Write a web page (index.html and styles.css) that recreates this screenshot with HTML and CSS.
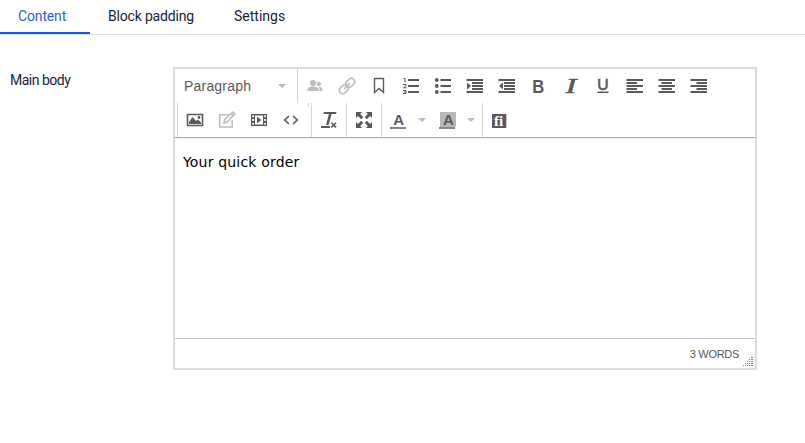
FILE: index.html
```html
<!DOCTYPE html>
<html lang="en">
<head>
<meta charset="utf-8">
<title>Main body</title>
<link rel="stylesheet" href="styles.css">
</head>
<body>
<nav class="tabs">
  <a class="tab active"><span class="t1">Content</span></a>
  <a class="tab"><span class="t2">Block padding</span></a>
  <a class="tab"><span class="t3">Settings</span></a>
</nav>
<main class="field">
  <label class="label">Main body</label>
  <section class="editor">
    <div class="toolbar">
      <div class="row">
        <div class="select"><span>Paragraph</span><i class="caret"></i></div>
        <div class="group">
          <svg class="icon off" viewBox="0 0 32 34"><circle cx="14" cy="14" r="3"/><path d="M8.500 22v-1.500q0-3 5.500-3t5.500 3V22z"/><circle cx="19.800" cy="15" r="2.200"/><path d="M19.500 17.800q4 .2 4 2.700V22h-3v-2q0-1.200-1-2.200z"/></svg>
          <svg class="icon off line" viewBox="0 0 32 34"><g transform="rotate(-45 16 17)"><rect x="6.500" y="13.700" width="10" height="6.600" rx="3.300"/><rect x="15.500" y="13.700" width="10" height="6.600" rx="3.300"/><path d="M12 17h8"/></g></svg>
          <svg class="icon line" viewBox="0 0 32 34"><path d="M11.500 9.500h9v14L16 19.500l-4.500 4z"/></svg>
          <svg class="icon" viewBox="0 0 32 34"><path d="M13 10h11v2H13zM13 16h11v2H13zM13 22h11v2H13z"/><path class="thin" d="M8.500 9.500H10v4M8 15.500h3v1.300l-2.500 2H11.500M8 21.500h3v3H8M9 23h2"/></svg>
          <svg class="icon" viewBox="0 0 32 34"><circle cx="9.800" cy="11" r="1.900"/><circle cx="9.800" cy="17" r="1.900"/><circle cx="9.800" cy="23" r="1.900"/><path d="M13.500 10H24v2H13.500zM13.500 16H24v2H13.500zM13.500 22H24v2H13.500z"/></svg>
          <svg class="icon" viewBox="0 0 32 34"><path d="M7.500 10H24v2H7.500zM13 13h11v2H13zM13 16h11v2H13zM13 19h11v2H13zM7.500 22H24v2H7.500zM8 13.500l4 3.500-4 3.500z"/></svg>
          <svg class="icon" viewBox="0 0 32 34"><path d="M7.500 10H24v2H7.500zM13 13h11v2H13zM13 16h11v2H13zM13 19h11v2H13zM7.500 22H24v2H7.500zM12 13.500L8 17l4 3.500z"/></svg>
          <svg class="icon" viewBox="0 0 32 34"><text class="bold" x="9.300" y="24" textLength="12" lengthAdjust="spacingAndGlyphs">B</text></svg>
          <svg class="icon" viewBox="0 0 32 34"><text class="italic" x="10.500" y="24" textLength="11" lengthAdjust="spacingAndGlyphs">I</text></svg>
          <svg class="icon" viewBox="0 0 32 34"><text class="under" x="9.900" y="21">U</text><path d="M10.500 22.500h11V24h-11z"/></svg>
          <svg class="icon" viewBox="0 0 32 34"><path d="M7.500 10H24v2H7.500zM7.500 13H18v2H7.500zM7.500 16H24v2H7.500zM7.500 19H18v2H7.500zM7.500 22H24v2H7.500z"/></svg>
          <svg class="icon" viewBox="0 0 32 34"><path d="M7.500 10H24v2H7.500zM10.500 13H21v2H10.500zM7.500 16H24v2H7.500zM10.500 19H21v2H10.500zM7.500 22H24v2H7.500z"/></svg>
          <svg class="icon" viewBox="0 0 32 34"><path d="M7.500 10H24v2H7.500zM13.500 13H24v2H13.500zM7.500 16H24v2H7.500zM13.500 19H24v2H13.500zM7.500 22H24v2H7.500z"/></svg>
        </div>
      </div>
      <div class="row second">
        <div class="group media">
          <svg class="icon" viewBox="0 0 32 34"><path class="stroke" d="M8.500 11.500h15v11h-15z"/><path d="M10 21v-2l3.500-5 3.500 4 2-1.500 3 3V21z"/><circle cx="20" cy="14.500" r="1.400"/></svg>
          <svg class="icon off line" viewBox="0 0 32 34"><path d="M18 11.700H8.700v12.300h12.500V17"/><path d="M13 20l.8-3.700 8-7.300 2 2-7.700 8zM20 10.600l2 2"/></svg>
          <svg class="icon" viewBox="0 0 32 34"><path fill-rule="evenodd" d="M8 11h16v12H8zM12 12v10h8V12zM9.200 12.300v1.900h1.700v-1.900zM9.200 16.100V18h1.700v-1.900zM9.200 19.900v1.900h1.700v-1.900zM21.200 12.300v1.900h1.700v-1.900zM21.200 16.100V18h1.700v-1.900zM21.200 19.900v1.900h1.700v-1.900z"/><path d="M12 11h8v1.500h-8zM12 21.500h8V23h-8zM14 13.800l4.500 3.200-4.500 3.200z"/></svg>
          <svg class="icon" viewBox="0 0 32 34"><path class="stroke" d="M14 13l-4.300 4 4.300 4M18 13l4.300 4-4.300 4"/></svg>
        </div>
        <div class="group clear">
          <svg class="icon" viewBox="0 0 32 34"><path d="M11 9h12.500l-.5 2H10.500zM8 23h9v2H8zM16 11h2.600L15.600 22H13z"/><path class="stroke" d="M18.300 19.700l4.700 4.700M23 19.700l-4.700 4.700"/></svg>
        </div>
        <div class="group full">
          <svg class="icon" viewBox="0 0 32 34"><path d="M8 9h6l-1.900 1.900 3.200 3.200-2.200 2.200-3.200-3.200L8 15zM24 9v6l-1.900-1.900-3.200 3.200-2.200-2.200 3.200-3.200L18 9zM8 25v-6l1.900 1.900 3.200-3.200 2.200 2.200-3.200 3.200L14 25zM24 25h-6l1.900-1.900-3.200-3.200 2.200-2.200 3.200 3.200L24 19z"/></svg>
        </div>
        <div class="group colors">
          <svg class="icon" viewBox="0 0 32 34"><text class="letter" x="11.200" y="22">A</text><path class="bar" d="M8 24h16v2H8z"/></svg>
          <i class="caret"></i>
          <svg class="icon back" viewBox="0 0 32 34"><path class="patch" d="M8 9h16v15H8z"/><text class="letter" x="11" y="22">A</text><path class="bar" d="M7 24h16v2H7z"/></svg>
          <i class="caret last"></i>
        </div>
        <div class="group">
          <svg class="icon" viewBox="0 0 32 34"><path d="M8 11h14.300v14H8z"/><text class="fi" x="10" y="23">fi</text></svg>
        </div>
      </div>
      <i class="stub"></i>
    </div>
    <div class="content">Your quick order</div>
    <footer class="status"><span>3 WORDS</span>
      <svg class="grip" viewBox="0 0 10 10"><path d="M8 0h2v1H8zM6 2h1v1H6zM8 2h2v1H8zM4 4h1v1H4zM6 4h1v1H6zM8 4h2v1H8zM2 6h1v1H2zM4 6h1v1H4zM6 6h1v1H6zM8 6h2v1H8zM0 8h1v1H0zM2 8h1v1H2zM4 8h1v1H4zM6 8h1v1H6zM8 8h2v1H8z"/></svg>
    </footer>
  </section>
</main>
</body>
</html>
```
FILE: styles.css
```css
* { box-sizing: border-box; }
body { margin: 0; background: #fff; color: #191d3a; font: 14px/20px Roboto, sans-serif; }
.tabs { display: flex; height: 35px; border-bottom: 1px solid #ddd; }
.tab { height: 34px; padding: 6px 22px 0 18px; white-space: nowrap; }
.tab.active { width: 90px; color: #2b5cf0; border-bottom: 2px solid #1456f1; }
.tab:nth-child(2) { width: 126px; }
.t1 { letter-spacing: -.15px; }
.t2 { letter-spacing: -.18px; }
.field { display: flex; padding: 32px 0 0 10px; }
.label { width: 163px; padding-top: 3px; letter-spacing: -.5px; }
.editor { width: 584px; height: 303px; border: 2px solid #dcdcdc; display: flex; flex-direction: column; font-family: "Liberation Sans", sans-serif; letter-spacing: 0; }
.toolbar { position: relative; height: 69px; border-bottom: 1px solid #aaa; box-shadow: 0 1px 2px #0001; }
.row { display: flex; height: 34px; }
.row.second { padding-left: 2px; }
.select { width: 122px; display: flex; align-items: center; justify-content: space-between; padding: 0 11px 0 9px; color: #595959; font-size: 14px; letter-spacing: .2px; }
.group { display: flex; border-left: 1px solid #d5d5d5; padding-left: 1px; }
.media { width: 134px; }
.clear, .full { width: 35px; }
.colors { width: 101px; padding-left: 0; align-items: center; }
.caret { width: 8px; height: 4px; background: #b5bcc2; clip-path: polygon(0 0, 100% 0, 50% 100%); }
.colors .caret { margin-left: 4px; }
.colors .caret.last { margin-left: 3px; }
.back { margin-left: 6px; }
.icon { display: block; flex: none; width: 32px; height: 34px; fill: #595959; }
.off { fill: #bdbdbd; stroke: none; }
.line { fill: none; stroke: #595959; stroke-width: 1.4; }
.line.off { stroke: #bdbdbd; stroke-width: 1.6; }
.stroke { fill: none; stroke: #595959; stroke-width: 1.6; }
.thin { fill: none; stroke: #595959; stroke-width: 1; }
.bar { fill: #858585; }
.patch { fill: #b8b8b8; }
.bold { font: bold 19px "Liberation Sans", sans-serif; }
.italic { font: italic 21px "Liberation Serif", serif; stroke: #595959; stroke-width: .5; }
.under { font: 500 16px Lato, sans-serif; stroke: #595959; stroke-width: .4; }
.letter { font: bold 15px "Liberation Sans", sans-serif; }
.fi { font: bold 15px "Liberation Serif", serif; fill: #fff; }
.stub { position: absolute; left: 133px; top: 34px; width: 1px; height: 4px; background: #d5d5d5; }
.content { flex: 1; padding: 14px 8px; color: #000; font: 14px/20px "DejaVu Sans", Verdana, sans-serif; letter-spacing: .18px; }
.status { height: 30px; border-top: 1px solid #c5c5c5; display: flex; justify-content: flex-end; align-items: center; padding-right: 2px; color: #595959; font-size: 11px; letter-spacing: -.3px; }
.grip { width: 10px; height: 10px; margin: 17px 0 0 4px; fill: #888; }
```
